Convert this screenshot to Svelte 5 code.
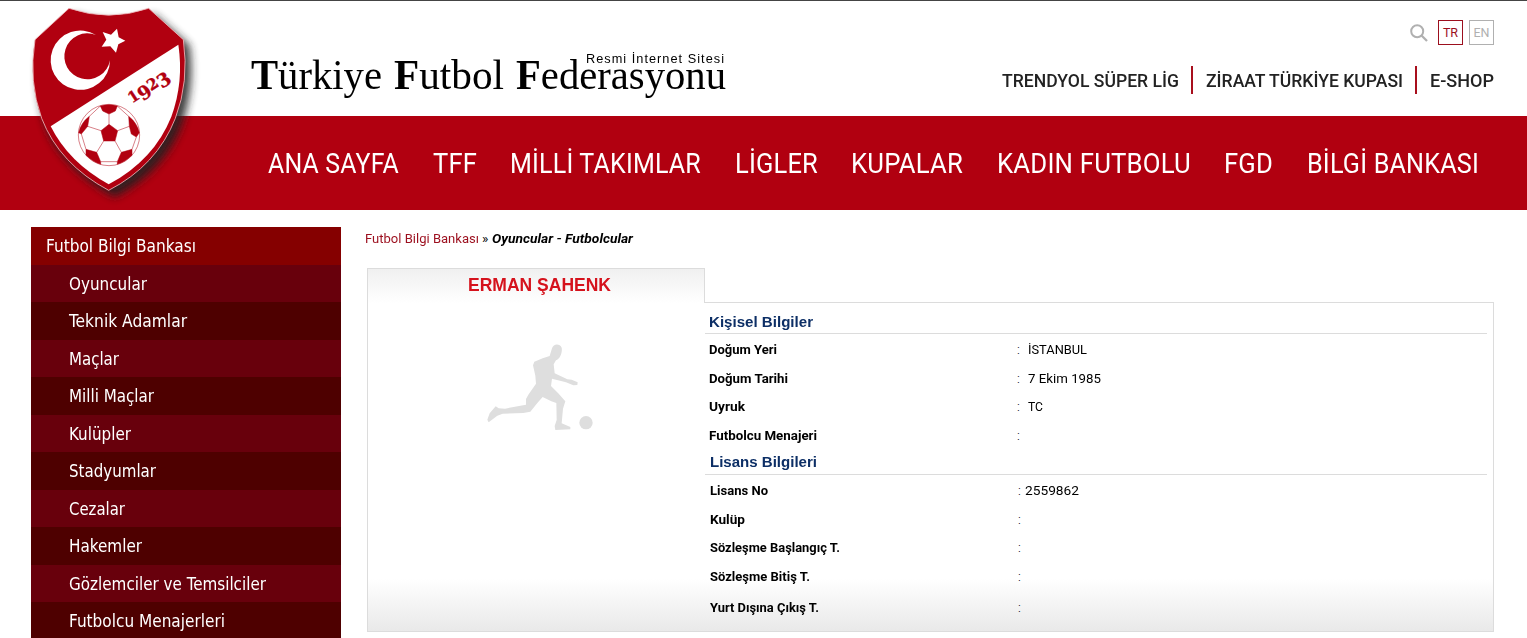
<script>
    const topLinks = [
        { text: "TRENDYOL SÜPER LİG", width: 177 },
        { text: "ZİRAAT TÜRKİYE KUPASI", width: 197 },
        { text: "E-SHOP", width: 64 },
    ];

    const navItems = [
        { text: "ANA SAYFA", width: 131 },
        { text: "TFF", width: 44 },
        { text: "MİLLİ TAKIMLAR", width: 191 },
        { text: "LİGLER", width: 83 },
        { text: "KUPALAR", width: 112 },
        { text: "KADIN FUTBOLU", width: 194 },
        { text: "FGD", width: 49 },
        { text: "BİLGİ BANKASI", width: 172 },
    ];

    const menu = [
        { text: "Oyuncular", width: 78 },
        { text: "Teknik Adamlar", width: 118 },
        { text: "Maçlar", width: 50 },
        { text: "Milli Maçlar", width: 85 },
        { text: "Kulüpler", width: 62 },
        { text: "Stadyumlar", width: 87 },
        { text: "Cezalar", width: 56 },
        { text: "Hakemler", width: 73 },
        { text: "Gözlemciler ve Temsilciler", width: 197 },
        { text: "Futbolcu Menajerleri", width: 156 },
    ];

    const personal = [
        { label: "Doğum Yeri", width: 68, value: "İSTANBUL", valueWidth: 59 },
        { label: "Doğum Tarihi", width: 79, value: "7 Ekim 1985", valueWidth: 73 },
        { label: "Uyruk", width: 36, value: "TC", valueWidth: 15 },
        { label: "Futbolcu Menajeri", width: 108 },
    ];

    const licence = [
        { label: "Lisans No", width: 58, value: "2559862", valueWidth: 54 },
        { label: "Kulüp", width: 35 },
        { label: "Sözleşme Başlangıç T.", width: 130 },
        { label: "Sözleşme Bitiş T.", width: 100 },
        { label: "Yurt Dışına Çıkış T.", width: 109 },
    ];

    // condenses a label horizontally so that it takes up exactly the given width
    function fit(node, width) {
        const natural = node.getBoundingClientRect().width;
        node.style.transform = `scaleX(${width / natural})`;
        node.style.marginRight = `${width - natural}px`;
    }
</script>

<header>
    <svg class="crest" viewBox="0 0 570 630" width="190" height="210">
        <defs>
            <filter id="shade" x="-20%" y="-20%" width="150%" height="150%">
                <feGaussianBlur stdDeviation="13"/>
            </filter>
        </defs>
        <path d="M166 44Q280 82 404 44L508 136Q526 265 482 385Q426 520 284 592Q142 515 86 400Q40 280 62 136Z"
            fill="#222" opacity=".88" filter="url(#shade)"/>
        <path d="M147 25Q266 66 386 25L490 119Q508 245 466 355Q410 497 266 571Q118 492 65 355Q25 245 45 119Z"
            fill="#b10010" stroke="#efb9bd" stroke-width="2.5"/>
        <path d="M475 134Q492 245 454 350Q402 480 266 553Q146 487 92 379Z" fill="#fff"/>
        <path d="M228 105A89 89 0 1 0 270 181A69 69 0 1 1 228 105Z" fill="#fff"/>
        <path d="M291 86L296 112L316 122L295 133L288 158L271 139L245 140L259 119L248 96L273 104Z" fill="#fff"/>
        <g stroke="#b10010" stroke-width="1.5">
            <circle cx="267" cy="405" r="92" fill="#fff"/>
            <path d="M241 318Q267 310 292 318L286 333L267 342L248 333Z" fill="#b10010"/>
            <path d="M267 373L293 392L285 423H251L243 392Z" fill="#b10010"/>
            <path d="M208 349Q183 368 176 398L184 402L203 379Z" fill="#b10010"/>
            <path d="M326 349Q351 368 358 398L349 411L334 402L328 379Z" fill="#b10010"/>
            <path d="M198 448L230 457L242 485V493Q222 488 198 466Z" fill="#b10010"/>
            <path d="M336 448L304 457L292 485V493Q312 488 336 466Z" fill="#b10010"/>
            <path d="M267 342V373M243 392L203 379M293 392L328 379M251 423L230 457M285 423L304 457M241 318L208 349M292 318L326 349M184 402L198 448M349 411L336 448M242 485H292" fill="none"/>
        </g>
        <g class="year" transform="translate(338 310) rotate(-33)" fill="#b10010" stroke="#b10010">
            <text font-size="46" x="-2" y="0">1</text>
            <text font-size="56" x="28" y="12">9</text>
            <text font-size="46" x="66" y="0">2</text>
            <text font-size="56" x="97" y="12">3</text>
        </g>
    </svg>

    <div class="brand">
        <span use:fit={131}><b>T</b>ürkiye</span>
        <span use:fit={110}><b>F</b>utbol</span>
        <span use:fit={210}><b>F</b>ederasyonu</span>
        <small use:fit={139}>Resmi İnternet Sitesi</small>
    </div>

    <div class="tools">
        <div class="lang">
            <svg width="18" height="18" viewBox="0 0 18 18" fill="none" stroke="#b0b0b0">
                <circle cx="7.2" cy="7.2" r="6" stroke-width="2"/>
                <path d="M11.5 11.5L17 17" stroke-width="2.3"/>
            </svg>
            <a class="active">TR</a>
            <a>EN</a>
        </div>
        <div class="links">
            {#each topLinks as link}
                <a><span use:fit={link.width}>{link.text}</span></a>
            {/each}
        </div>
    </div>
</header>

<nav>
    {#each navItems as item}
        <a><span use:fit={item.width}>{item.text}</span></a>
    {/each}
</nav>

<main>
    <aside>
        <div class="title"><span use:fit={150}>Futbol Bilgi Bankası</span></div>
        {#each menu as item}
            <div class="item"><span use:fit={item.width}>{item.text}</span></div>
        {/each}
    </aside>

    <section>
        <div class="crumbs">
            <a use:fit={114}>Futbol Bilgi Bankası</a>
            <span class="sep">»</span>
            <b use:fit={141}>Oyuncular - Futbolcular</b>
        </div>

        <div class="tabs">
            <h1><span use:fit={143}>ERMAN ŞAHENK</span></h1>
            <div class="rest"></div>
        </div>
        <div class="card">
            <div class="photo">
                <svg width="140" height="115" viewBox="0 0 420 345" fill="#dedede">
                    <path d="M246 55C250 40 270 40 275 53C278 66 270 87 258 91L251 103L254 130L292 148L305 149L323 157L322 165L310 166L288 157L246 146L243 168L264 189L286 214L279 236L275 280L301 291V298L256 300L254 288L260 270L259 219L244 214L218 201L202 219L181 245L160 249L98 251L82 257L56 277L52 269L59 250L77 229L86 235L105 236L168 224L168 207L175 194L198 161L196 137L189 106L193 95L218 85L239 78Z"/>
                    <circle cx="348" cy="278" r="20"/>
                </svg>
            </div>
            <div class="info">
                <h2><span use:fit={104}>Kişisel Bilgiler</span></h2>
                {#each personal as row}
                    <div class="row">
                        <b><span use:fit={row.width}>{row.label}</span></b>
                        <i>:</i>
                        {#if row.value}<span class="value" use:fit={row.valueWidth}>{row.value}</span>{/if}
                    </div>
                {/each}
                <div class="licence">
                    <h2><span use:fit={107}>Lisans Bilgileri</span></h2>
                    {#each licence as row}
                        <div class="row">
                            <b><span use:fit={row.width}>{row.label}</span></b>
                            <i>:</i>
                            {#if row.value}<span class="value" use:fit={row.valueWidth}>{row.value}</span>{/if}
                        </div>
                    {/each}
                </div>
            </div>
        </div>
    </section>
</main>

<style>
    :global(body) {
        background: #fff;
        overflow: hidden;
    }

    :global(#app) {
        height: 638px;
        overflow: hidden;
        font-family: Roboto, sans-serif;
        color: #000;
    }

    a, span, b, small {
        flex: none;
        transform-origin: 0 50%;
        white-space: nowrap;
    }

    header {
        position: relative;
        display: flex;
        justify-content: space-between;
        box-sizing: border-box;
        height: 116px;
        border-top: 1px solid #444;
        padding: 0 33px 0 251px;
    }

    .crest {
        position: absolute;
        left: 20px;
        top: -1px;
        z-index: 2;
        overflow: visible;
    }

    .year {
        font-family: "DejaVu Serif", serif;
        font-weight: bold;
    }

    .brand {
        position: relative;
        display: flex;
        gap: 12px;
        height: 48px;
        padding-top: 50px;
        font-family: "Liberation Serif", serif;
        font-size: 42px;
        line-height: 48px;
    }

    .brand small {
        position: absolute;
        left: 335px;
        top: 50px;
        font-family: "Liberation Sans", sans-serif;
        font-size: 12.5px;
        line-height: 16px;
        letter-spacing: 1px;
    }

    .lang {
        display: flex;
        justify-content: flex-end;
        padding-top: 19px;
    }

    .lang svg {
        margin: 4px 10px 0 0;
    }

    .lang a {
        box-sizing: border-box;
        width: 25px;
        height: 25px;
        border: 1px solid #b0b0b0;
        font-size: 12.5px;
        line-height: 24px;
        text-align: center;
        color: #b0b0b0;
    }

    .lang a.active {
        margin-right: 6px;
        border-color: #9c0f1e;
        color: #9c0f1e;
    }

    .links {
        display: flex;
        justify-content: flex-end;
        padding-top: 21px;
    }

    .links a {
        height: 28px;
        font-size: 18.5px;
        font-weight: 500;
        line-height: 30px;
        color: #222;
    }

    .links a + a {
        margin-left: 12px;
        padding-left: 13px;
        border-left: 2px solid #a80f1d;
    }

    .links span, nav span {
        display: inline-block;
    }

    nav {
        display: flex;
        gap: 33.5px;
        height: 94px;
        padding-left: 268px;
        background: #b10010;
        font-size: 28px;
        line-height: 95px;
        letter-spacing: .2px;
        color: #fff;
    }

    main {
        display: flex;
        padding: 17px 33px 0 31px;
    }

    aside {
        width: 310px;
        font-family: "DejaVu Sans Condensed", "DejaVu Sans", sans-serif;
        font-stretch: condensed;
        font-size: 18px;
        color: #fff;
    }

    aside span {
        display: inline-block;
    }

    .title {
        height: 37.5px;
        padding-left: 15px;
        background: #850000;
        line-height: 38px;
    }

    .item {
        height: 37.5px;
        padding-left: 38px;
        background: #68000c;
        line-height: 38px;
    }

    .item:nth-child(odd) {
        background: #4e0000;
    }

    section {
        width: 1127px;
        margin-left: 26px;
    }

    .crumbs {
        display: flex;
        height: 41px;
        margin-left: -2px;
        font-size: 13.5px;
        line-height: 23px;
    }

    .crumbs a {
        color: #9c0f1e;
    }

    .crumbs .sep {
        width: 10px;
        margin-left: 3px;
    }

    .crumbs b {
        font-style: italic;
    }

    .tabs {
        display: flex;
        height: 35px;
    }

    h1 {
        box-sizing: border-box;
        width: 338px;
        margin: 0;
        padding: 0 0 0 100px;
        border: 1px solid #dcdcdc;
        border-bottom: 0;
        background: linear-gradient(#f0f0f0, #fff);
        font: bold 18px/33px "Liberation Sans", sans-serif;
        color: #d5121c;
    }

    h1 span, h2 span, .row b span {
        display: inline-block;
    }

    .rest {
        flex: 1;
        border-bottom: 1px solid #dcdcdc;
    }

    .card {
        display: flex;
        box-sizing: border-box;
        height: 329px;
        border: 1px solid #dcdcdc;
        border-top: 0;
        background: linear-gradient(#fff 84%, #e9e9e9);
    }

    .photo {
        width: 337px;
    }

    .photo svg {
        margin: 27px 0 0 102px;
    }

    .info {
        width: 782px;
    }

    h2 {
        box-sizing: border-box;
        height: 31px;
        margin: 0 0 1px;
        padding: 7px 0 0 3.5px;
        border-bottom: 1px solid #dcdcdc;
        font: bold 15px/24px "Liberation Sans", sans-serif;
        color: #0d2f66;
    }

    .row {
        display: flex;
        height: 28.5px;
        padding-left: 3.5px;
        font-size: 13.5px;
        line-height: 29.5px;
    }

    .row b {
        width: 308.5px;
    }

    .row i {
        width: 11px;
        font-style: normal;
        font-weight: 300;
    }

    .licence h2 {
        height: 26px;
        padding: 0 0 0 5px;
        line-height: 25px;
    }

    .licence .row {
        padding-left: 4.5px;
    }

    .licence .row i {
        width: 6.5px;
    }

    .licence .row:last-child {
        padding-top: 3px;
    }
</style>
